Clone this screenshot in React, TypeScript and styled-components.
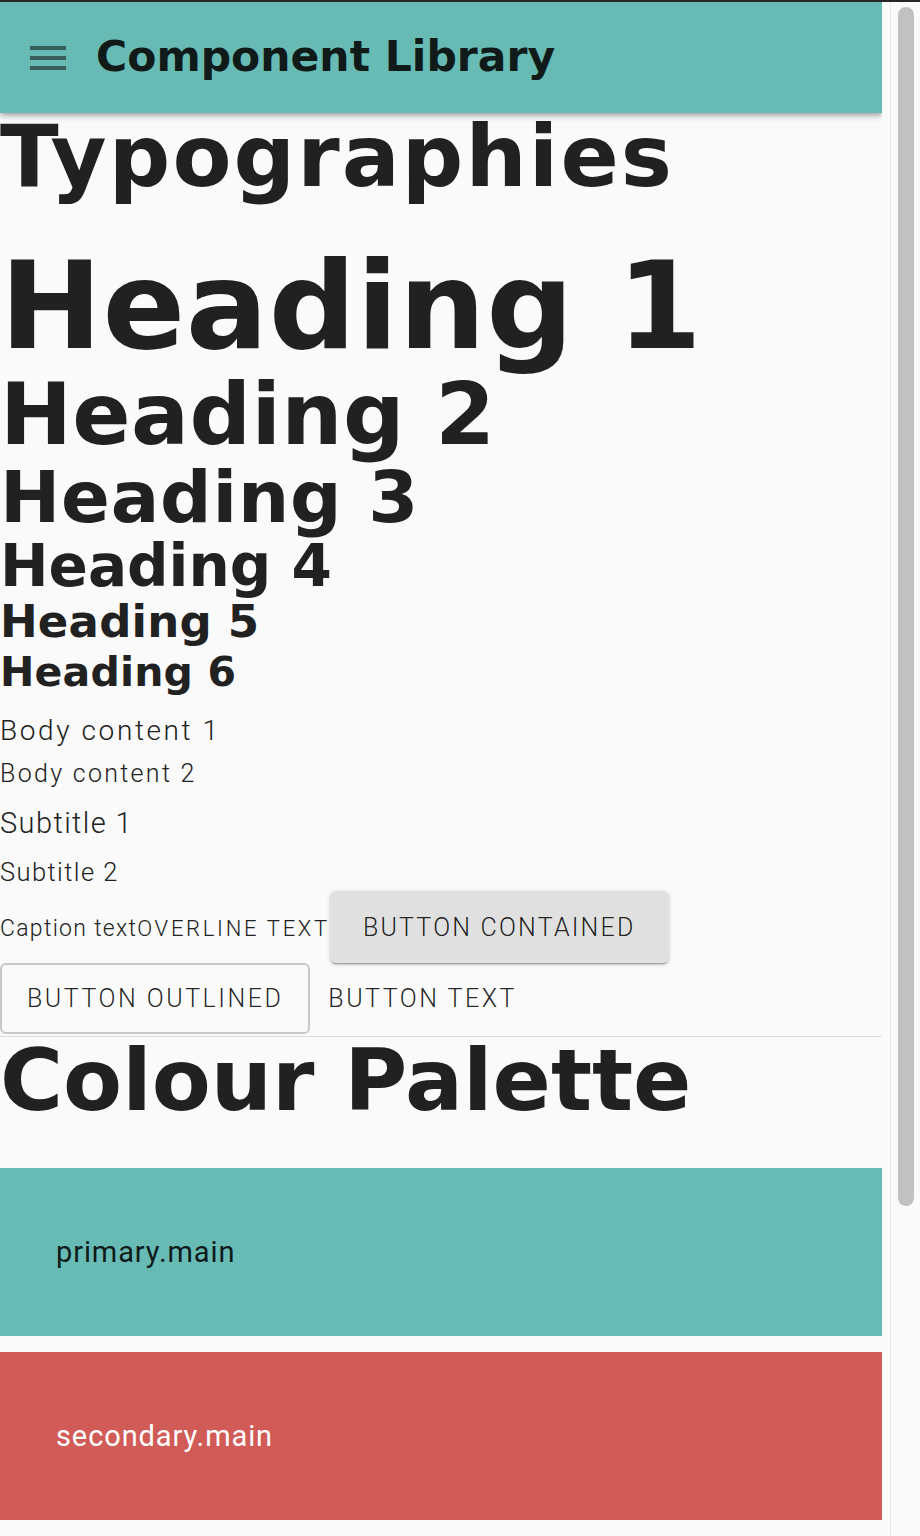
import React from "react";
import styled, { createGlobalStyle } from "styled-components";

const GlobalStyle = createGlobalStyle`
  html, body {
    margin: 0;
    padding: 0;
    background: #fafafa;
    overflow: hidden;
  }
  * { box-sizing: border-box; }
`;

const HEADING_FONT = `"DejaVu Sans", "Liberation Sans", sans-serif`;
const BODY_FONT = `Roboto, "Liberation Sans", sans-serif`;

const TopStrip = styled.div`
  height: 2px;
  background: #262626;
`;

const Shell = styled.div`
  display: flex;
  height: calc(100vh - 2px);
  background: #fafafa;
`;

const Main = styled.main`
  flex: 0 0 882px;
  overflow: hidden;
  color: #212121;
`;

const ScrollRail = styled.div`
  flex: 0 0 30px;
  margin-left: 8px;
  padding: 5px 6px 0 7px;
  border-left: 1px solid #e6e6e6;
  border-right: 2px solid #f0f0f0;
  background: #fafafa;
`;

const ScrollThumb = styled.div`
  width: 16px;
  height: 1199px;
  border-radius: 8px;
  background: #c1c1c1;
`;

const AppBar = styled.header`
  position: relative;
  z-index: 1;
  height: 111px;
  display: flex;
  align-items: center;
  padding-left: 24px;
  background: #67bbb4;
  box-shadow: 0px 2px 4px -1px rgba(0, 0, 0, 0.2),
    0px 4px 5px 0px rgba(0, 0, 0, 0.14), 0px 1px 10px 0px rgba(0, 0, 0, 0.12);
`;

const MenuButton = styled.button`
  display: flex;
  width: 48px;
  height: 48px;
  padding: 0;
  border: 0;
  background: transparent;
  margin-right: 24px;
`;

const AppTitle = styled.h1`
  margin: 0;
  font-family: ${HEADING_FONT};
  font-weight: 700;
  font-size: 42.5px;
  line-height: 1;
  color: #0f1a19;
`;

const Heading = styled.div<{ $size: number; $mt: number; $ls?: number }>`
  margin: ${(p) => p.$mt}px 0 0;
  font-family: ${HEADING_FONT};
  font-weight: 700;
  font-size: ${(p) => p.$size}px;
  line-height: 1;
  letter-spacing: ${(p) => p.$ls ?? 0}px;
  color: #212121;
  white-space: nowrap;
`;

const BodyText = styled.div<{ $size: number; $lh: number; $mt: number; $ls: number }>`
  margin-top: ${(p) => p.$mt}px;
  font-family: ${BODY_FONT};
  font-weight: 300;
  font-size: ${(p) => p.$size}px;
  line-height: ${(p) => p.$lh}px;
  letter-spacing: ${(p) => p.$ls}px;
  color: #212121;
`;

const MixedRow = styled.div`
  display: flex;
  flex-wrap: wrap;
  align-items: baseline;
`;

const Caption = styled.span`
  font-family: ${BODY_FONT};
  font-weight: 300;
  font-size: 23px;
  line-height: 34px;
  letter-spacing: 1.3px;
`;

const Overline = styled.span`
  font-family: ${BODY_FONT};
  font-weight: 300;
  font-size: 22px;
  line-height: 34px;
  letter-spacing: 2.7px;
  text-transform: uppercase;
`;

type Variant = "contained" | "outlined" | "text";

const Button = styled.button<{ $variant: Variant }>`
  display: inline-flex;
  align-items: center;
  justify-content: center;
  height: ${(p) => (p.$variant === "contained" ? 72 : 71)}px;
  padding: 0
    ${(p) => (p.$variant === "contained" ? 33 : p.$variant === "outlined" ? 25 : 18)}px;
  font-family: ${BODY_FONT};
  font-weight: 300;
  font-size: 25px;
  letter-spacing: ${(p) => (p.$variant === "contained" ? 2.2 : 2.5)}px;
  text-transform: uppercase;
  color: rgba(0, 0, 0, 0.87);
  border-radius: 6px;
  cursor: pointer;
  background: ${(p) => (p.$variant === "contained" ? "#e0e0e0" : "transparent")};
  border: ${(p) =>
    p.$variant === "outlined" ? "2px solid rgba(0, 0, 0, 0.2)" : "0"};
  box-shadow: ${(p) =>
    p.$variant === "contained"
      ? "0px 3px 1px -2px rgba(0,0,0,0.2), 0px 2px 2px 0px rgba(0,0,0,0.14), 0px 1px 5px 0px rgba(0,0,0,0.12)"
      : "none"};
`;

const Divider = styled.hr`
  margin: 2px 0 0;
  border: 0;
  height: 1px;
  background: rgba(0, 0, 0, 0.12);
`;

const SwatchList = styled.div`
  display: flex;
  flex-direction: column;
  gap: 16px;
  margin-top: 45px;
`;

const Swatch = styled.div<{ $bg: string; $fg: string }>`
  height: 168px;
  flex: 0 0 168px;
  display: flex;
  align-items: center;
  padding-left: 56px;
  background: ${(p) => p.$bg};
  color: ${(p) => p.$fg};
  font-family: ${BODY_FONT};
  font-weight: 400;
  font-size: 29px;
  line-height: 1;
  letter-spacing: 0.9px;
`;

const MenuIcon = () => (
  <svg width="48" height="48" viewBox="0 0 24 24" aria-hidden="true">
    <path
      fill="#3a5e5a"
      d="M3 18h18v-2H3v2zm0-5h18v-2H3v2zm0-7v2h18V6H3z"
    />
  </svg>
);

const headings = [
  { label: "Heading 1", size: 122, mt: 46, ls: 0.5 },
  { label: "Heading 2", size: 86, mt: 4, ls: 0.4 },
  { label: "Heading 3", size: 72, mt: 4, ls: 0.8 },
  { label: "Heading 4", size: 58, mt: 4, ls: 0 },
  { label: "Heading 5", size: 45, mt: 4, ls: 0.2 },
  { label: "Heading 6", size: 41, mt: 8, ls: 0.2 },
];

const swatches = [
  { name: "primary.main", bg: "#67bbb4", fg: "#0e1b1a" },
  { name: "secondary.main", bg: "#d15b57", fg: "#ffffff" },
];

export default function App() {
  return (
    <>
      <GlobalStyle />
      <TopStrip />
      <Shell>
        <Main>
          <AppBar>
            <MenuButton aria-label="menu">
              <MenuIcon />
            </MenuButton>
            <AppTitle>Component Library</AppTitle>
          </AppBar>

          <Heading $size={86} $mt={0} $ls={2.1}>
            Typographies
          </Heading>
          {headings.map((h) => (
            <Heading key={h.label} $size={h.size} $mt={h.mt} $ls={h.ls}>
              {h.label}
            </Heading>
          ))}

          <BodyText $size={28} $lh={42} $mt={17} $ls={2.6}>
            Body content 1
          </BodyText>
          <BodyText $size={25} $lh={38} $mt={3} $ls={2.3}>
            Body content 2
          </BodyText>
          <BodyText $size={29} $lh={44} $mt={8} $ls={1.4}>
            Subtitle 1
          </BodyText>
          <BodyText $size={25.5} $lh={38} $mt={8} $ls={1.4}>
            Subtitle 2
          </BodyText>

          <MixedRow>
            <Caption>Caption text</Caption>
            <Overline>overline text</Overline>
            <Button $variant="contained">Button contained</Button>
            <Button $variant="outlined">Button outlined</Button>
            <Button $variant="text">Button text</Button>
          </MixedRow>

          <Divider />

          <Heading $size={86} $mt={0}>
            Colour Palette
          </Heading>

          <SwatchList>
            {swatches.map((s) => (
              <Swatch key={s.name} $bg={s.bg} $fg={s.fg}>
                {s.name}
              </Swatch>
            ))}
          </SwatchList>
        </Main>
        <ScrollRail aria-hidden="true">
          <ScrollThumb />
        </ScrollRail>
      </Shell>
    </>
  );
}
